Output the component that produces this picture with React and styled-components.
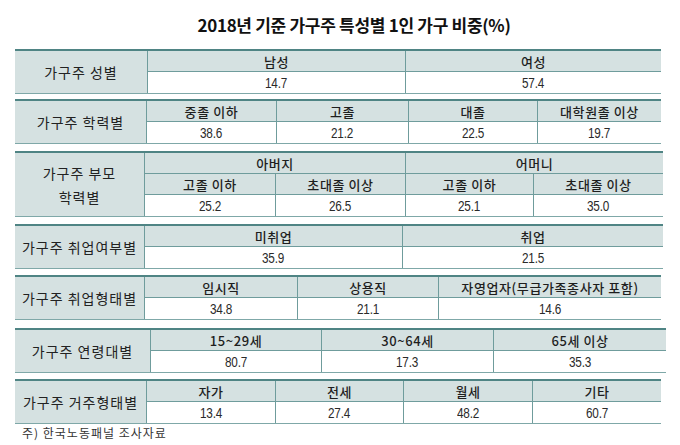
import styled, { createGlobalStyle } from "styled-components";

const GlobalStyle = createGlobalStyle`
  html, body {
    margin: 0;
    padding: 0;
    background: #ffffff;
  }
  body {
    font-family: "Noto Sans CJK KR", "Noto Sans", sans-serif;
    color: #222222;
  }
`;

const Page = styled.div`
  width: 680px;
  height: 445px;
  box-sizing: border-box;
  padding: 14px 0 0 15px;
  display: flex;
  flex-direction: column;
`;

const Title = styled.h1`
  margin: 0 0 13px 0;
  width: 646px;
  padding-left: 32px;
  box-sizing: border-box;
  text-align: center;
  font-size: 17px;
  font-weight: 700;
  line-height: 22px;
  letter-spacing: -0.3px;
  color: #111111;
`;

const Table = styled.div`
  display: grid;
  grid-template-columns: ${(p) => p.$cols.map((c) => `${c}px`).join(" ")};
  grid-template-rows: repeat(${(p) => p.$rows}, 21px);
  margin-top: ${(p) => p.$mt}px;
  width: fit-content;
  border-top: 2px solid #4f8484;
  border-bottom: 1px solid #7fa8a8;
`;

const Label = styled.div`
  grid-row: 1 / -1;
  display: flex;
  flex-direction: column;
  align-items: center;
  justify-content: center;
  background: #d5e1e1;
  border-right: 1px solid #6f9c9c;
  font-size: 14px;
  letter-spacing: 1px;
  line-height: 24px;
  color: #222222;
`;

const Cell = styled.div`
  grid-column: span ${(p) => p.$span || 1};
  display: flex;
  align-items: center;
  justify-content: center;
  box-sizing: border-box;
  background: ${(p) => (p.$head ? "#d5e1e1" : "#ffffff")};
  border-right: ${(p) => (p.$last ? "none" : "1px solid #6f9c9c")};
  border-bottom: ${(p) => (p.$bottom ? "none" : "1px solid #6f9c9c")};
  white-space: nowrap;
`;

const HeadText = styled.span`
  font-size: 13px;
  font-weight: 500;
  letter-spacing: 0.6px;
  color: #1e1e1e;
`;

const Value = styled.span`
  display: inline-block;
  font-family: "Liberation Sans Narrow", "Liberation Sans", sans-serif;
  font-size: 14px;
  letter-spacing: -0.3px;
  transform: scaleX(0.84);
  color: #2a2a2a;
`;

const Note = styled.div`
  margin-top: 2px;
  padding-left: 7px;
  font-size: 12px;
  line-height: 14px;
  letter-spacing: 1px;
  color: #333333;
`;

const blocks = [
  {
    label: ["가구주 성별"],
    cols: [133, 258, 255],
    mt: 0,
    heads: [[{ t: "남성" }, { t: "여성" }]],
    values: ["14.7", "57.4"],
  },
  {
    label: ["가구주 학력별"],
    cols: [132, 130, 132, 129, 123],
    mt: 5,
    heads: [[{ t: "중졸 이하" }, { t: "고졸" }, { t: "대졸" }, { t: "대학원졸 이상" }]],
    values: ["38.6", "21.2", "22.5", "19.7"],
  },
  {
    label: ["가구주 부모", "학력별"],
    cols: [130, 131, 130, 128, 129],
    mt: 7,
    heads: [
      [
        { t: "아버지", span: 2 },
        { t: "어머니", span: 2 },
      ],
      [{ t: "고졸 이하" }, { t: "초대졸 이상" }, { t: "고졸 이하" }, { t: "초대졸 이상" }],
    ],
    values: ["25.2", "26.5", "25.1", "35.0"],
  },
  {
    label: ["가구주 취업여부별"],
    cols: [130, 258, 260],
    mt: 7,
    heads: [[{ t: "미취업" }, { t: "취업" }]],
    values: ["35.9", "21.5"],
  },
  {
    label: ["가구주 취업형태별"],
    cols: [130, 153, 141, 222],
    mt: 6,
    heads: [[{ t: "임시직" }, { t: "상용직" }, { t: "자영업자(무급가족종사자 포함)" }]],
    values: ["34.8", "21.1", "14.6"],
  },
  {
    label: ["가구주 연령대별"],
    cols: [136, 171, 172, 172],
    mt: 8,
    heads: [[{ t: "15~29세" }, { t: "30~64세" }, { t: "65세 이상" }]],
    values: ["80.7", "17.3", "35.3"],
  },
  {
    label: ["가구주 거주형태별"],
    cols: [132, 129, 128, 129, 128],
    mt: 6,
    heads: [[{ t: "자가" }, { t: "전세" }, { t: "월세" }, { t: "기타" }]],
    values: ["13.4", "27.4", "48.2", "60.7"],
  },
];

const Block = ({ block }) => {
  const rows = block.heads.length + 1;
  return (
    <Table $cols={block.cols} $rows={rows} $mt={block.mt}>
      <Label>
        {block.label.map((line) => (
          <span key={line}>{line}</span>
        ))}
      </Label>
      {block.heads.map((row, r) =>
        row.map((h, i) => (
          <Cell key={`h${r}-${i}`} $head $span={h.span} $last={i === row.length - 1}>
            <HeadText>{h.t}</HeadText>
          </Cell>
        ))
      )}
      {block.values.map((v, i) => (
        <Cell key={`v${i}`} $bottom $last={i === block.values.length - 1}>
          <Value>{v}</Value>
        </Cell>
      ))}
    </Table>
  );
};

export default function App() {
  return (
    <>
      <GlobalStyle />
      <Page>
        <Title>2018년 기준 가구주 특성별 1인 가구 비중(%)</Title>
        {blocks.map((b) => (
          <Block key={b.label.join()} block={b} />
        ))}
        <Note>주) 한국노동패널 조사자료</Note>
      </Page>
    </>
  );
}
